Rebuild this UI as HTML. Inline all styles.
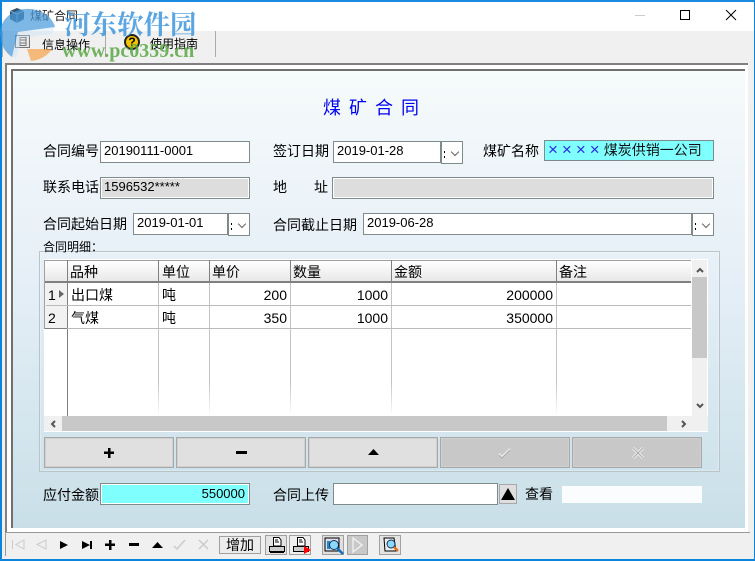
<!DOCTYPE html>
<html><head><meta charset="utf-8">
<style>
html,body{margin:0;padding:0;}
body{width:755px;height:561px;overflow:hidden;position:relative;background:#f0f0f0;font-family:"Liberation Sans","WenQuanYi Zen Hei","Noto Sans CJK SC",sans-serif;font-size:14px;color:#000;}
div,span{position:absolute;box-sizing:border-box;}
svg{position:absolute;overflow:visible;}
.l{white-space:nowrap;font-size:14px;line-height:16px;height:16px;}
.i{border:1px solid #7f8a8a;background:#fff;font-size:13px;line-height:18px;padding-left:3px;white-space:nowrap;}
.g{background:#ddd;box-shadow:inset 0 0 0 1px #fff;}
.dd{border:1px solid #7f8a8a;background:#fff;}
.dd:before{content:"";position:absolute;left:2px;top:9px;width:1px;height:2px;background:#000;box-shadow:0 5px 0 #000;}
.dd:after{content:"";position:absolute;left:10px;top:7px;width:5px;height:5px;border-right:1px solid #666;border-bottom:1px solid #666;transform:rotate(45deg);}
.h{font-size:14px;line-height:16px;top:264px;white-space:nowrap;}
.c{font-size:14px;line-height:16px;white-space:nowrap;}
.n{font-size:14px;line-height:16px;text-align:right;white-space:nowrap;}
.v{width:1px;background:linear-gradient(180deg,#c4c4c4 75%,#fff 100%);top:283px;height:133px;}
.b{top:437px;height:31px;width:130px;background:#e0e0e0;border:1px solid #a8a8a8;box-shadow:inset 0 0 0 1px #d0d0d0;}
.d{background:#c8c8c8;}
.tb{border:1px solid #a0a0a0;background:#eee;top:535px;height:20px;}
</style></head><body>
<!-- window -->
<div style="left:0;top:0;width:755px;height:561px;border:1px solid #0a84dc;border-top:2px solid #1a8ae0;border-bottom:2px solid #0a84dc;border-left:2px solid #0a84dc;background:#f0f0f0;"></div>
<div style="left:2px;top:2px;width:752px;height:29px;background:#fff;"></div>
<!-- title -->
<svg style="left:9px;top:7px" width="17" height="17" viewBox="0 0 17 17"><path d="M8 1L15 4V12L8 16L1 12V4Z" fill="#33526e"/><path d="M1 4L8 7L15 4M8 7V16" stroke="#8fb0c8" fill="none"/></svg>
<div class="l" style="left:30px;top:8px;font-size:12px;color:#222;">煤矿合同</div>
<div style="left:635px;top:15px;width:10px;height:1px;background:#ccc;"></div>
<div style="left:680px;top:10px;width:10px;height:10px;border:1px solid #000;"></div>
<svg style="left:726px;top:10px" width="10" height="10"><path d="M0 0L10 10M10 0L0 10" stroke="#000" fill="none"/></svg>
<!-- menu -->
<div style="left:2px;top:31px;width:1px;height:26px;background:#aaa;"></div>
<div style="left:105px;top:31px;width:1px;height:26px;background:#aaa;"></div>
<div style="left:215px;top:31px;width:1px;height:26px;background:#aaa;"></div>
<div style="left:15px;top:35px;width:15px;height:13px;border:1px solid #777;background:#e8e8e8;"></div>
<svg style="left:19px;top:37px" width="8" height="9"><path d="M1 .5H7V8.500H1ZM1 3H7M1 6H7" stroke="#777" fill="none"/></svg>
<div style="left:124px;top:34px;width:16px;height:16px;border-radius:50%;background:#f4c400;border:2px solid #222;color:#000;font:bold 12px/12px 'Liberation Sans';text-align:center;">?</div>
<div class="l" style="left:42px;top:37px;font-size:12px;">信息操作</div>
<div class="l" style="left:150px;top:36px;font-size:12px;">使用指南</div>
<!-- frames -->
<div style="left:5px;top:63px;width:743px;height:469px;background:#fff;border:solid #808080;border-width:2px 0 0 2px;"></div>
<div style="left:11px;top:69px;width:734px;height:459px;border:solid #707070;border-width:2px 0 0 2px;background:linear-gradient(180deg,#f6fbfb 0%,#edf4f9 25%,#e6eff7 45%,#d8e8f0 70%,#c9dfe8 100%);"></div>
<!-- heading -->
<div style="left:323px;top:97px;color:#0000f0;font-size:18px;line-height:22px;letter-spacing:8px;white-space:nowrap;">煤矿合同</div>
<!-- row 1 -->
<div class="l" style="left:43px;top:143px;">合同编号</div>
<div class="i" style="left:100px;top:141px;width:150px;height:22px;">20190111-0001</div>
<div class="l" style="left:273px;top:143px;">签订日期</div>
<div class="i" style="left:333px;top:141px;width:108px;height:22px;">2019-01-28</div>
<div class="dd" style="left:441px;top:141px;width:22px;height:23px;"></div>
<div class="l" style="left:483px;top:143px;">煤矿名称</div>
<div class="i" style="left:544px;top:140px;width:170px;height:21px;background:#80ffff;color:#111;font-size:14px;padding-left:3px;"><span style="position:static;color:#2a2ae8;font-size:17px;letter-spacing:4px;line-height:17px;vertical-align:top;">××××</span>煤炭供销一公司</div>
<!-- row 2 -->
<div class="l" style="left:43px;top:179px;">联系电话</div>
<div class="i g" style="left:100px;top:177px;width:150px;height:22px;">1596532*****</div>
<div class="l" style="left:273px;top:179px;">地</div>
<div class="l" style="left:314px;top:179px;">址</div>
<div class="i g" style="left:332px;top:177px;width:382px;height:22px;"></div>
<!-- row 3 -->
<div class="l" style="left:43px;top:216px;">合同起始日期</div>
<div class="i" style="left:133px;top:213px;width:95px;height:22px;">2019-01-01</div>
<div class="dd" style="left:228px;top:213px;width:22px;height:23px;"></div>
<div class="l" style="left:273px;top:217px;">合同截止日期</div>
<div class="i" style="left:363px;top:213px;width:329px;height:22px;">2019-06-28</div>
<div class="dd" style="left:692px;top:213px;width:22px;height:23px;"></div>
<!-- group -->
<div style="left:39px;top:251px;width:681px;height:221px;border:1px solid #b8c4c8;box-shadow:inset 0 0 0 1px rgba(255,255,255,.25);"></div>
<div class="l" style="left:43px;top:240px;font-size:12px;line-height:14px;height:14px;">合同明细：</div>
<!-- grid -->
<div style="left:44px;top:259px;width:664px;height:173px;background:#fff;"></div>
<div style="left:45px;top:260px;width:646px;height:23px;background:linear-gradient(180deg,#fff,#e8e8e8);border-top:1px solid #a0a0a0;border-bottom:2px solid #808080;"></div>
<div style="left:44px;top:260px;width:1px;height:69px;background:#a0a0a0;"></div>
<div style="left:45px;top:283px;width:22px;height:45px;background:#f2f2f2;"></div>
<div style="left:67px;top:260px;width:1px;height:156px;background:#808080;"></div>
<div style="left:158px;top:260px;width:1px;height:23px;background:#808080;"></div>
<div style="left:209px;top:260px;width:1px;height:23px;background:#808080;"></div>
<div style="left:290px;top:260px;width:1px;height:23px;background:#808080;"></div>
<div style="left:391px;top:260px;width:1px;height:23px;background:#808080;"></div>
<div style="left:556px;top:260px;width:1px;height:23px;background:#808080;"></div>
<div class="v" style="left:158px;"></div><div class="v" style="left:209px;"></div><div class="v" style="left:290px;"></div><div class="v" style="left:391px;"></div><div class="v" style="left:556px;"></div>
<div style="left:46px;top:305px;width:645px;height:1px;background:#bbb;"></div>
<div style="left:46px;top:328px;width:645px;height:1px;background:#bbb;"></div>
<div style="left:45px;top:328px;width:22px;height:1px;background:#808080;"></div>
<div class="h" style="left:70px;">品种</div><div class="h" style="left:162px;">单位</div><div class="h" style="left:212px;">单价</div><div class="h" style="left:293px;">数量</div><div class="h" style="left:394px;">金额</div><div class="h" style="left:559px;">备注</div>
<div class="c" style="left:48px;top:287px;">1</div>
<svg style="left:59px;top:290px" width="5" height="8"><path d="M0 0L5 4L0 8Z" fill="#666"/></svg>
<div class="c" style="left:48px;top:310px;">2</div>
<div class="c" style="left:71px;top:287px;">出口煤</div><div class="c" style="left:71px;top:310px;">气煤</div>
<div class="c" style="left:162px;top:287px;">吨</div><div class="c" style="left:162px;top:310px;">吨</div>
<div class="n" style="left:210px;top:287px;width:77px;">200</div><div class="n" style="left:210px;top:310px;width:77px;">350</div>
<div class="n" style="left:291px;top:287px;width:97px;">1000</div><div class="n" style="left:291px;top:310px;width:97px;">1000</div>
<div class="n" style="left:392px;top:287px;width:161px;">200000</div><div class="n" style="left:392px;top:310px;width:161px;">350000</div>
<!-- scrollbars -->
<div style="left:692px;top:260px;width:15px;height:156px;background:#f0f0f0;"></div>
<div style="left:692px;top:277px;width:15px;height:81px;background:#c8c8c8;"></div>
<svg style="left:696px;top:267px" width="8" height="6"><path d="M1 5L4 2L7 5" stroke="#555" stroke-width="2" fill="none"/></svg>
<svg style="left:696px;top:403px" width="8" height="6"><path d="M1 1L4 4L7 1" stroke="#555" stroke-width="2" fill="none"/></svg>
<div style="left:44px;top:416px;width:664px;height:15px;background:#f0f0f0;"></div>
<div style="left:62px;top:416px;width:605px;height:15px;background:#c8c8c8;"></div>
<svg style="left:50px;top:420px" width="6" height="8"><path d="M5 1L2 4L5 7" stroke="#555" stroke-width="2" fill="none"/></svg>
<svg style="left:681px;top:420px" width="6" height="8"><path d="M1 1L4 4L1 7" stroke="#555" stroke-width="2" fill="none"/></svg>
<!-- buttons -->
<div class="b" style="left:44px;"></div><div class="b" style="left:176px;"></div><div class="b" style="left:308px;"></div><div class="b d" style="left:440px;"></div><div class="b d" style="left:572px;"></div>
<svg style="left:104px;top:448px" width="10" height="10"><path d="M4 0H6.500V3.500H10V6H6.500V10H4V6H0V3.500H4Z" fill="#000"/></svg>
<div style="left:236px;top:451px;width:11px;height:3px;background:#000;"></div>
<svg style="left:368px;top:449px" width="11" height="6"><path d="M5.500 0L11 6H0Z" fill="#000"/></svg>
<svg style="left:498px;top:447px" width="13" height="12"><path d="M1 7L4 10L12 2" stroke="#eee" stroke-width="2" fill="none"/><path d="M1 8L4 11L12 3" stroke="#aaa" fill="none"/></svg>
<svg style="left:632px;top:447px" width="12" height="12"><path d="M1 1L11 11M11 1L1 11" stroke="#eee" stroke-width="3" fill="none"/><path d="M1 1L11 11M11 1L1 11" stroke="#aaa" stroke-width="1" fill="none"/></svg>
<!-- bottom row -->
<div class="l" style="left:43px;top:487px;">应付金额</div>
<div class="i" style="left:100px;top:483px;width:150px;height:22px;background:#80ffff;box-shadow:inset 0 0 0 1px #fff;text-align:right;padding-right:4px;line-height:19px;">550000</div>
<div class="l" style="left:273px;top:487px;">合同上传</div>
<div class="i" style="left:333px;top:483px;width:165px;height:22px;"></div>
<div style="left:499px;top:484px;width:18px;height:20px;background:#dedede;border:1px solid #a8a8a8;"></div>
<svg style="left:501px;top:488px" width="14" height="12"><path d="M7 0L14 12H0Z" fill="#000"/></svg>
<div class="l" style="left:525px;top:486px;">查看</div>
<div style="left:562px;top:486px;width:140px;height:17px;background:#fff;opacity:.9;"></div>
<!-- toolbar -->
<div style="left:5px;top:532px;width:745px;height:1px;background:#999;"></div>
<div style="left:5px;top:532px;width:1px;height:24px;background:#999;"></div>
<svg style="left:12px;top:540px" width="13" height="10"><path d="M.5 0V9M12 0L4 4.500L12 9Z" stroke="#ccc" fill="none"/></svg>
<svg style="left:36px;top:540px" width="11" height="10"><path d="M10 0L1 4.500L10 9Z" stroke="#ccc" fill="none"/></svg>
<svg style="left:60px;top:541px" width="8" height="8"><path d="M0 0L8 4L0 8Z" fill="#000"/></svg>
<svg style="left:82px;top:541px" width="11" height="8"><path d="M0 0L8 4L0 8ZM8 0H10V8H8Z" fill="#000"/></svg>
<svg style="left:105px;top:540px" width="10" height="10"><path d="M4 0H6.500V3.500H10V6H6.500V10H4V6H0V3.500H4Z" fill="#000"/></svg>
<div style="left:129px;top:543px;width:10px;height:3px;background:#000;"></div>
<svg style="left:152px;top:542px" width="11" height="6"><path d="M5.500 0L11 6H0Z" fill="#000"/></svg>
<svg style="left:173px;top:539px" width="13" height="11"><path d="M1 7L4 10L12 1" stroke="#ccc" stroke-width="1.500" fill="none"/></svg>
<svg style="left:198px;top:539px" width="11" height="11"><path d="M1 1L10 10M10 1L1 10" stroke="#ccc" stroke-width="1.500" fill="none"/></svg>
<div class="tb" style="left:219px;top:536px;width:42px;height:18px;background:#ececec;font-size:14px;line-height:16px;text-align:center;">增加</div>
<div class="tb" style="left:265px;width:22px;background:#e4e4e4;"></div>
<div class="tb" style="left:289px;width:22px;"></div>
<div class="tb" style="left:322px;width:22px;background:#e0e0e0;"></div>
<div class="tb" style="left:347px;width:21px;background:#c8c8c8;"></div>
<div class="tb" style="left:379px;width:22px;background:#e4e4e4;"></div>
<svg style="left:269px;top:537px" width="16" height="16"><path d="M4.500 .5H10L12 3V9H4.500Z" fill="#fff" stroke="#000"/><path d="M6 3H9M6 5H10" stroke="#000"/><path d="M.5 9.500H15.500V14.500H.5Z" fill="#ccc" stroke="#000"/><path d="M1 15.500H15" stroke="#000"/></svg>
<svg style="left:293px;top:537px" width="18" height="17"><path d="M4.500 .5H10L12 3V9H4.500Z" fill="#fff" stroke="#000"/><path d="M6 3H9M6 5H10" stroke="#000"/><path d="M.5 9.500H15.500V14.500H.5Z" fill="#ccc" stroke="#000"/><path d="M11 9L18 13L11 17Z" fill="#f00"/></svg>
<svg style="left:324px;top:537px" width="20" height="18"><rect x="1" y="1" width="14" height="13" fill="#dde" stroke="#000"/><rect x="3" y="4" width="3" height="8" fill="#28c"/><circle cx="10" cy="8" r="4.500" fill="#8dd8ff" stroke="#135"/><path d="M13 11L19 17" stroke="#136fc0" stroke-width="2.500"/></svg>
<svg style="left:352px;top:537px" width="11" height="16"><path d="M1 1L10 8L1 15Z" fill="none" stroke="#eee" stroke-width="1.500"/></svg>
<svg style="left:382px;top:537px" width="17" height="16"><path d="M2 1H12L14 14H3Z" fill="#eee" stroke="#000"/><circle cx="9" cy="7" r="4" fill="#8dd8ff" stroke="#135"/><path d="M12 10L16 14" stroke="#e07020" stroke-width="2.500"/></svg>
<!-- watermark -->
<svg style="left:0;top:14px" width="58" height="48" viewBox="0 0 58 48"><path d="M1 24A27 23 0 0 1 55 13L18 18L12 43A27 24 0 0 1 1 24Z" fill="#4a9bdc" opacity=".72"/><path d="M18 18L55 13L52 20L22 24L16 44L12 43Z" fill="#bfe0f5" opacity=".35"/><path d="M27 35H52A27 24 0 0 1 31 47Z" fill="#f7a14a" opacity=".7"/></svg>
<div style="left:64px;top:9px;font-family:'Liberation Serif','Noto Serif CJK SC',serif;font-weight:bold;font-size:26.500px;line-height:32px;color:#3f97dd;opacity:.85;white-space:nowrap;">河东软件园</div>
<div style="left:62px;top:41px;font-family:'Liberation Serif',serif;font-weight:bold;font-size:20px;line-height:20px;color:#5aa845;opacity:.85;white-space:nowrap;">www.pc0359.cn</div>
</body></html>
